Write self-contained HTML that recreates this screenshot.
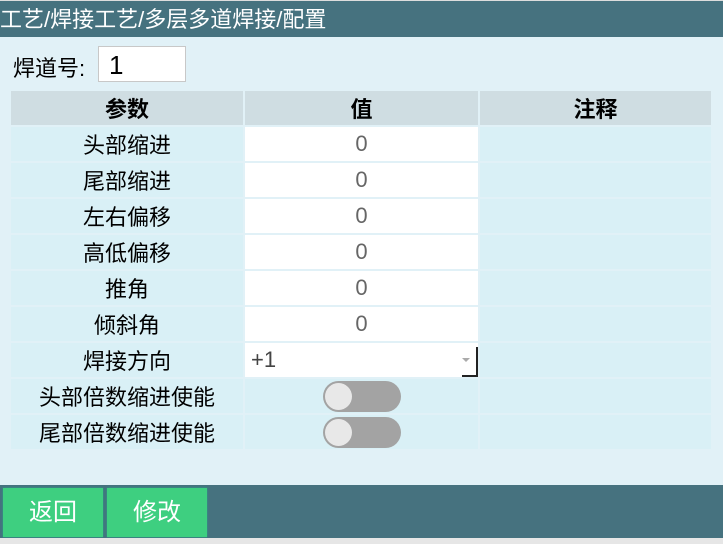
<!DOCTYPE html><html><head><style>
body{margin:0;width:723px;height:544px;overflow:hidden;background:#e1f1f7;font-family:"Liberation Sans","Noto Sans CJK SC",sans-serif;position:relative}
.t{position:absolute;left:0;top:0;width:723px;height:36px;background:#46727f;color:#fff;font-size:22px;line-height:38px;border-top:1px solid #ddd}
.lbl{position:absolute;left:13px;top:51px;font-size:22px}
.inp{position:absolute;left:98px;top:46px;width:88px;height:36px;background:#fff;border:1px solid #c8c8c8;box-sizing:border-box;font-size:26px;line-height:36px;padding-left:10px}
table{position:absolute;left:9px;top:89px;border-collapse:separate;border-spacing:2px;width:704px}
td,th{height:34px;padding:0;text-align:center;font-size:22px;background:#d9f0f6}
th{background:#cfdde2;font-weight:bold}
td.v{background:#fff;color:#666}
.sel{text-align:left;padding-left:6px;color:#444;position:relative;background:#fff}
.sel:after{content:"";position:absolute;right:8px;top:15px;border:4px solid transparent;border-top-color:#aaa}
.sel b{position:absolute;right:0;bottom:0;width:14px;height:28px;border-right:2px solid #222;border-bottom:2px solid #222}
.tg{display:inline-block;width:78px;height:31px;border-radius:16px;background:#a3a3a3;position:relative;vertical-align:middle}
.tg:before{content:"";position:absolute;left:2px;top:2px;width:27px;height:27px;border-radius:50%;background:#e8e8e8}
.f{position:absolute;left:0;top:485px;width:723px;height:53px;background:#46727f}
.b{position:absolute;top:488px;width:100px;height:49px;background:#3ecf80;color:#fff;font-size:24px;text-align:center;line-height:50px;box-shadow:0 0 2px #2a8}
.bot{position:absolute;top:538px;left:0;width:723px;height:6px;background:#e6e6e6}
</style></head><body>
<div class="t">工艺/焊接工艺/多层多道焊接/配置</div>
<div class="lbl">焊道号:</div><div class="inp">1</div>
<table>
<tr><th style="width:232px">参数</th><th style="width:233px">值</th><th>注释</th></tr>
<tr><td>头部缩进</td><td class="v">0</td><td></td></tr>
<tr><td>尾部缩进</td><td class="v">0</td><td></td></tr>
<tr><td>左右偏移</td><td class="v">0</td><td></td></tr>
<tr><td>高低偏移</td><td class="v">0</td><td></td></tr>
<tr><td>推角</td><td class="v">0</td><td></td></tr>
<tr><td>倾斜角</td><td class="v">0</td><td></td></tr>
<tr><td>焊接方向</td><td class="sel">+1<b></b></td><td></td></tr>
<tr><td>头部倍数缩进使能</td><td><span class="tg"></span></td><td></td></tr>
<tr><td>尾部倍数缩进使能</td><td><span class="tg"></span></td><td></td></tr>
</table>
<div class="f"></div>
<div class="b" style="left:3px">返回</div><div class="b" style="left:107px">修改</div>
<div class="bot"></div>
</body></html>
